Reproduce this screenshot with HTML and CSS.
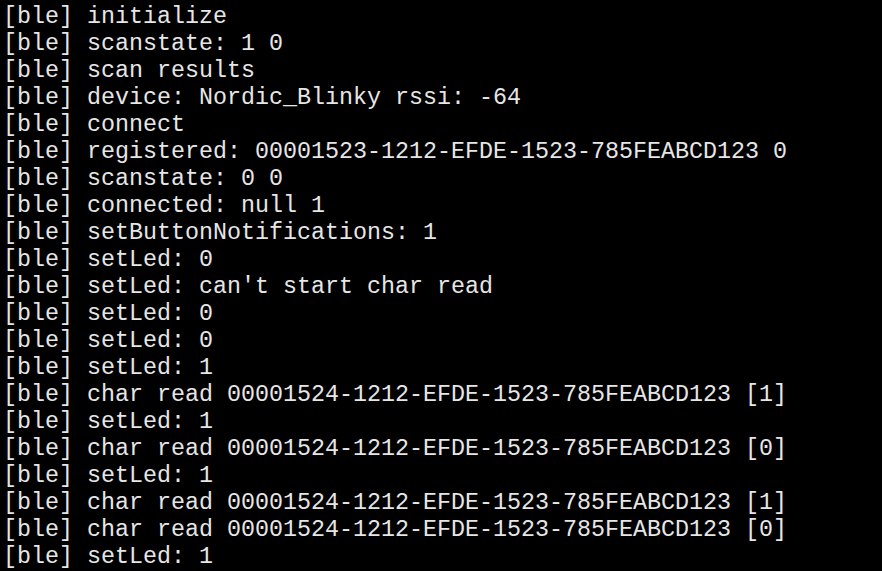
FILE: index.html
```
<!DOCTYPE html>
<html>
<head>
<meta charset="utf-8">
<link rel="stylesheet" href="styles.css">
</head>
<body>
<pre class="term">[ble] initialize
[ble] scanstate: 1 0
[ble] scan results
[ble] device: Nordic_Blinky rssi: -64
[ble] connect
[ble] registered: 00001523-1212-EFDE-1523-785FEABCD123 0
[ble] scanstate: 0 0
[ble] connected: null 1
[ble] setButtonNotifications: 1
[ble] setLed: 0
[ble] setLed: can't start char read
[ble] setLed: 0
[ble] setLed: 0
[ble] setLed: 1
[ble] char read 00001524-1212-EFDE-1523-785FEABCD123 [1]
[ble] setLed: 1
[ble] char read 00001524-1212-EFDE-1523-785FEABCD123 [0]
[ble] setLed: 1
[ble] char read 00001524-1212-EFDE-1523-785FEABCD123 [1]
[ble] char read 00001524-1212-EFDE-1523-785FEABCD123 [0]
[ble] setLed: 1</pre>
</body>
</html>
```
FILE: styles.css
```
html, body {
  margin: 0;
  padding: 0;
  background: #000;
  overflow: hidden;
}
.term {
  margin: 0;
  padding: 4px 0 0 3px;
  font-family: "Liberation Mono", monospace;
  font-size: 23.33px;
  line-height: 27px;
  color: #e6e6e6;
  white-space: pre;
}
```
